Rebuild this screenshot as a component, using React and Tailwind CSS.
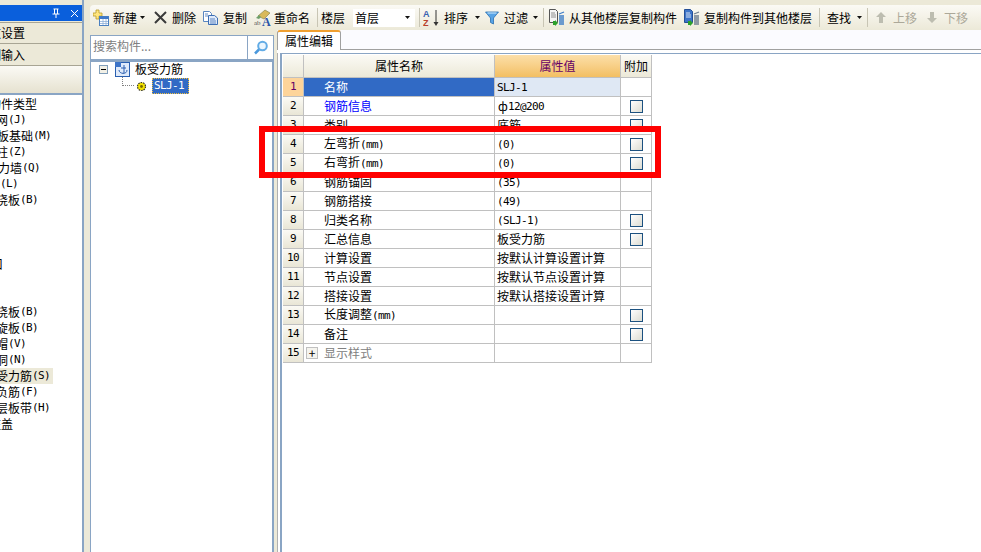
import React from 'react';

const cjk = "font-['Noto_Sans_CJK_SC','Liberation_Sans',sans-serif]";
const mono = "font-['DejaVu_Sans_Mono',monospace] text-[11px] tracking-[-0.62px]";

// half width characters are narrower than the default CJK latin
const Mixed = ({ text }) =>
  text.split(/([\x00-\x7f]+)/).map((s, i) =>
    /^[\x00-\x7f]/.test(s) ? (
      <span key={i} className={mono}>{s}</span>
    ) : (
      <span key={i}>{s}</span>
    )
  );

const NewIcon = () => (
  <svg width="16" height="18" viewBox="0 0 16 18" className="shrink-0">
    <path d="M3 1h3v3h3v3H6v3H3V7H0V4h3z" fill="#ffe680" stroke="#b79a2c" strokeWidth="0.8" />
    <rect x="6.5" y="7.5" width="9" height="9" fill="#fff" stroke="#4a80c0" />
    <rect x="6.5" y="7.5" width="9" height="2.5" fill="#3f78c8" />
    <path d="M7 12.5h8M7 14.5h8M10 10v6M13 10v6" stroke="#8fb0d8" strokeWidth="0.8" />
  </svg>
);

const DeleteIcon = () => (
  <svg width="13" height="13" viewBox="0 0 13 13" className="shrink-0">
    <path d="M1 1l11 11M12 1L1 12" stroke="#3a3a3a" strokeWidth="2" />
  </svg>
);

const CopyIcon = () => (
  <svg width="15" height="14" viewBox="0 0 15 14" className="shrink-0">
    <path d="M.5.5h6l2 2v8h-8z" fill="#fff" stroke="#5a86c0" />
    <path d="M5.5 4.5h6l3 2.5v6.500h-9z" fill="#dfeafa" stroke="#3d6fb4" />
    <path d="M7 8h5M7 10h6M7 12h6M2 3h3M2 5h3" stroke="#3d6fb4" strokeWidth="0.8" />
  </svg>
);

const RenameIcon = () => (
  <svg width="17" height="18" viewBox="0 0 17 18" className="shrink-0">
    <path d="M4 7l7-6 5 3-6 6z" fill="#d9b95a" stroke="#8c8a50" strokeWidth="0.7" />
    <path d="M2 9l3-3 2 2-2 2z" fill="#6f9f6a" />
    <text x="0" y="16" fontSize="7" fill="#555" fontFamily="Liberation Serif">ab</text>
    <text x="8" y="17" fontSize="12" fontWeight="700" fill="#2a55a8" fontFamily="Liberation Serif">A</text>
  </svg>
);

const SortIcon = () => (
  <svg width="17" height="18" viewBox="0 0 17 18" className="shrink-0">
    <text x="0" y="8" fontSize="9" fontWeight="700" fill="#3a62b0" fontFamily="Liberation Sans">A</text>
    <text x="0" y="17" fontSize="9" fontWeight="700" fill="#b8402c" fontFamily="Liberation Sans">Z</text>
    <path d="M13 1v14" stroke="#333" strokeWidth="1" />
    <path d="M10.500 13h5L13 17z" fill="#333" />
  </svg>
);

const FilterIcon = () => (
  <svg width="14" height="14" viewBox="0 0 14 14" className="shrink-0">
    <path d="M.5 1h13L8.500 7v6l-3-1.500V7z" fill="#58a4e6" stroke="#2a6fb0" strokeWidth="0.8" />
    <path d="M2.500 2h9" stroke="#d0ecff" />
  </svg>
);

const FloorCopyIcon = ({ dark }) => (
  <svg width="16" height="18" viewBox="0 0 16 18" className="shrink-0">
    <path d="M.5.5h6l2 2v11h-8z" fill={dark ? '#3d74c8' : '#f4f4f4'} stroke={dark ? '#254f96' : '#555'} />
    <path d="M2 4h4M2 6h5M2 8h5" stroke={dark ? '#fff' : '#777'} strokeWidth="0.8" />
    <path d="M4 12h2v-1l3 3-3 3v-1H4z" fill="#2ca02c" />
    <path d="M10 7h5M10 9h5M10 11h5M10 13h5M10 15h5" stroke={dark ? '#6f7f90' : '#3f7fc8'} strokeWidth="1.300" />
    <path d="M10 5l5-2" stroke={dark ? '#6f7f90' : '#3f7fc8'} strokeWidth="1.300" />
  </svg>
);

const MoveIcon = ({ down }) => (
  <svg width="10" height="11" viewBox="0 0 10 11" className="shrink-0">
    <path d={down ? 'M3 0h4v6h3l-5 5-5-5h3z' : 'M5 0l5 5H7v6H3V5H0z'} fill="#bdbdb0" />
  </svg>
);

const Caret = () => (
  <svg width="5" height="3" viewBox="0 0 5 3" className="shrink-0">
    <path d="M0 0h5L2.500 3z" fill="#111" />
  </svg>
);
const Sep = ({ className }) => <div className={`h-[19px] w-px shrink-0 bg-[#c8c5b4] ${className}`} />;

const Toolbar = () => (
  <div className="flex h-[25px] shrink-0 items-center rounded-tl-[4px] bg-gradient-to-b from-[#fbfaf5] to-[#ece9d8] pl-[3px] text-[12px] whitespace-nowrap text-black">
    <NewIcon />
    <span className="ml-1 w-[24px]">新建</span>
    <div className="ml-[3px]"><Caret /></div>
    <div className="ml-[9px]"><DeleteIcon /></div>
    <span className="ml-[5px] w-[24px]">删除</span>
    <div className="ml-[7px]"><CopyIcon /></div>
    <span className="ml-[5px] w-[24px]">复制</span>
    <div className="ml-[7px]"><RenameIcon /></div>
    <span className="ml-[3px] w-[36px]">重命名</span>
    <Sep className="ml-[7px]" />
    <span className="ml-[3px] w-[24px]">楼层</span>
    <div className="ml-[8px] flex h-[18px] w-[62px] shrink-0 items-center bg-white pl-[2px]">
      <span className="w-[50px]">首层</span>
      <Caret />
    </div>
    <Sep className="ml-[4px]" />
    <div className="ml-[3px]"><SortIcon /></div>
    <span className="ml-1 w-[24px]">排序</span>
    <div className="ml-[7px]"><Caret /></div>
    <div className="ml-[5px]"><FilterIcon /></div>
    <span className="ml-[5px] w-[24px]">过滤</span>
    <div className="ml-[5px]"><Caret /></div>
    <Sep className="ml-[5px]" />
    <div className="ml-[5px]"><FloorCopyIcon /></div>
    <span className="ml-1 w-[108px]">从其他楼层复制构件</span>
    <div className="ml-[7px]"><FloorCopyIcon dark /></div>
    <span className="ml-1 w-[108px]">复制构件到其他楼层</span>
    <Sep className="ml-[7px]" />
    <span className="ml-[7px] w-[24px]">查找</span>
    <div className="ml-[6px]"><Caret /></div>
    <Sep className="ml-[5px]" />
    <div className="ml-2"><MoveIcon /></div>
    <span className="ml-[7px] w-[24px] text-[#aca899]">上移</span>
    <div className="ml-[10px]"><MoveIcon down /></div>
    <span className="ml-[7px] w-[24px] text-[#aca899]">下移</span>
  </div>
);

// left list is scrolled sideways, so names are cut by the window edge
const listItems = [
  { t: '构件类型', m: '-ml-[11px]' },
  { t: '轴网(J)', m: '-ml-[16px]' },
  { t: '筏板基础(M)', m: '-ml-[15px]' },
  { t: '框架柱(Z)', m: '-ml-[28px]' },
  { t: '剪力墙(Q)', m: '-ml-[14px]' },
  { t: '梁(L)', m: '-ml-[12px]' },
  { t: '现浇板(B)', m: '-ml-[16px]' },
  { t: '' },
  { t: '' },
  { t: '' },
  { t: '口', m: '-ml-[9px]' },
  { t: '' },
  { t: '' },
  { t: '现浇板(B)', m: '-ml-[16px]' },
  { t: '螺旋板(B)', m: '-ml-[16px]' },
  { t: '柱帽(V)', m: '-ml-[16px]' },
  { t: '板洞(N)', m: '-ml-[16px]' },
  { t: '板受力筋(S)', m: '-ml-[16px]', active: true },
  { t: '板负筋(F)', m: '-ml-[16px]' },
  { t: '楼层板带(H)', m: '-ml-[16px]' },
  { t: '柱盖', m: '-ml-[11px]' },
];

const LeftPanel = () => (
  <div className="flex w-[82px] shrink-0 flex-col overflow-hidden pt-[5px] text-[12px] text-black">
    <div className="flex h-[16px] shrink-0 items-center justify-end bg-[#0a5fdc] pr-px">
      <svg width="10" height="11" viewBox="0 0 10 11" className="mr-[9px]">
        <path d="M2.500 1h5M3.500 1v5M6.500 1v5M1.500 6h7M5 6v4" stroke="#fff" strokeWidth="1" fill="none" />
      </svg>
      <svg width="9" height="9" viewBox="0 0 9 9" className="mr-[2px]">
        <path d="M1 1l7 7M8 1L1 8" stroke="#fff" strokeWidth="1" />
      </svg>
    </div>
    <div className="mt-px flex h-[22px] shrink-0 items-center overflow-hidden border-y border-[#a8a594] bg-[#ece9d8]">
      <span className="-ml-[23px] whitespace-nowrap">参数设置</span>
    </div>
    <div className="flex h-[22px] shrink-0 items-center overflow-hidden border-b border-[#a8a594] bg-[#ece9d8]">
      <span className="-ml-[23px] whitespace-nowrap">绘制输入</span>
    </div>
    <div className="h-[27px] shrink-0 bg-gradient-to-b from-[#fbfaf5] to-[#e6e2d0]" />
    <div className="flex-1 overflow-hidden border-t-2 border-[#8aa5c4] bg-white pt-px">
      {listItems.map((item, i) => (
        <div key={i} className="h-[16px] overflow-hidden leading-[16px] whitespace-nowrap">
          <div className={`inline-flex h-[16px] items-center pr-[3px] ${item.m || ''} ${item.active ? 'bg-[#ece9d8]' : ''}`}>
            <Mixed text={item.t} />
          </div>
        </div>
      ))}
    </div>
  </div>
);

const TreePanel = () => (
  <div className="flex w-[184px] shrink-0 flex-col bg-[#ece9d8]">
    <div className="mt-[5px] flex h-[25px] shrink-0 border border-[#8aa5c4] bg-white">
      <div className="flex w-[157px] items-center border-r border-[#8aa5c4] pb-[3px] pl-[2px] text-[12px] text-[#808080]">搜索构件...</div>
      <div className="flex flex-1 items-center justify-center">
        <svg width="16" height="15" viewBox="0 0 16 15">
          <circle cx="9.500" cy="6" r="4.300" fill="#eaf6ff" stroke="#62ace6" strokeWidth="2" />
          <path d="M6 9.500L2 13.500" stroke="#4a98dc" strokeWidth="2.500" />
        </svg>
      </div>
    </div>
    <div className="flex-1 border-t-2 border-r-2 border-l border-[#8aa5c4] bg-white text-[12px] text-black">
      <div className="flex h-[14px] items-center pl-[8px]">
        <div className="flex h-[9px] w-[9px] items-center justify-center border border-[#7f9db9] bg-[#f2f0e6]">
          <div className="h-px w-[5px] bg-black" />
        </div>
        <svg width="15" height="15" viewBox="0 0 15 15" className="ml-[7px]">
          <rect x="0.500" y="0.500" width="14" height="14" fill="#dfeafa" stroke="#2a5fb0" />
          <path d="M0 0h6v5H0z" fill="#3d74c8" />
          <path d="M9 3v8M6 6h5M4 8c0 4 8 5 8 0" stroke="#2a5fb0" fill="none" />
        </svg>
        <span className="ml-[5px]">板受力筋</span>
      </div>
      <div className="flex h-[20px] items-center pl-[31px]">
        <div className="mb-[9px] h-[9px] w-[12px] border-b border-l border-dotted border-[#808080]" />
        <svg width="11" height="11" viewBox="0 0 11 11" className="ml-[2px] mr-[5px] shrink-0">
          <circle cx="5.500" cy="5.500" r="4" fill="#f4e300" stroke="#333" strokeWidth="1.200" strokeDasharray="1.500 1" />
          <circle cx="5.500" cy="5.500" r="1.400" fill="#7a6a00" />
        </svg>
        <div className={`flex h-[16px] w-[37px] items-center border border-dotted border-[#f0c040] bg-[#316ac5] pl-px text-white ${mono}`}>
          SLJ-1
        </div>
      </div>
    </div>
  </div>
);

const rows = [
  { n: '名称', v: 'SLJ-1', selected: true },
  { n: '钢筋信息', v: '12@200', sym: true, link: true, check: true },
  { n: '类别', v: '底筋', check: true },
  { n: '左弯折(mm)', v: '(0)', check: true },
  { n: '右弯折(mm)', v: '(0)', check: true },
  { n: '钢筋锚固', v: '(35)' },
  { n: '钢筋搭接', v: '(49)' },
  { n: '归类名称', v: '(SLJ-1)', check: true },
  { n: '汇总信息', v: '板受力筋', check: true },
  { n: '计算设置', v: '按默认计算设置计算' },
  { n: '节点设置', v: '按默认节点设置计算' },
  { n: '搭接设置', v: '按默认搭接设置计算' },
  { n: '长度调整(mm)', v: '', check: true },
  { n: '备注', v: '', check: true },
  { n: '显示样式', v: '', expand: true },
];

const Check = () => (
  <div className="h-[13px] w-[13px] border border-[#1c5180] bg-gradient-to-br from-white to-[#dcdcd2]" />
);

const PropertyGrid = () => (
  <div className="ml-px mt-px w-[369px] text-[12px] text-black">
    <div className="flex h-[23px] border-b border-[#c0c0c0]">
      <div className="w-[21px] border-r border-[#c0c0c0] bg-gradient-to-b from-[#fbfaf5] to-[#ece9d8]" />
      <div className="flex w-[191px] items-center justify-center border-r border-[#c0c0c0] bg-gradient-to-b from-[#fbfaf5] to-[#ece9d8]">属性名称</div>
      <div className="flex w-[126px] items-center justify-center border-r border-[#c0c0c0] bg-gradient-to-b from-[#fcdfa8] to-[#f3bf62] text-[#660066]">属性值</div>
      <div className="flex w-[31px] items-center justify-center border-r border-[#c0c0c0] bg-gradient-to-b from-[#fbfaf5] to-[#ece9d8]">附加</div>
    </div>
    {rows.map((r, i) => (
      <div key={r.n} className="flex h-[19px] border-b border-[#c0c0c0]">
        <div className={`flex w-[21px] items-center justify-center border-r border-[#c0c0c0] ${mono} ${r.selected ? 'bg-[#fdd49a] text-[#660066]' : 'bg-gradient-to-b from-[#fbfaf5] to-[#e9e6d6]'}`}>
          {i + 1}
        </div>
        <div className={`flex w-[191px] items-center border-r border-[#c0c0c0] ${r.selected ? 'bg-[#316ac5] text-white' : ''} ${r.link ? 'text-[#0000ff]' : ''} ${r.expand ? 'text-[#808080]' : ''}`}>
          {r.expand ? (
            <div className="ml-[2px] mr-[6px] flex h-[12px] w-[12px] items-center justify-center border border-[#c0c0c0] bg-[#f5f4ee] text-[12px] leading-none text-black">+</div>
          ) : (
            <div className="w-[20px]" />
          )}
          <span><Mixed text={r.n} /></span>
        </div>
        <div className={`flex w-[126px] items-center border-r border-[#c0c0c0] pl-[2px] ${r.selected ? 'bg-[#dfe8f4]' : ''}`}>
          {r.sym && <span className="ml-px w-[10px]">ф</span>}
          <span><Mixed text={r.v} /></span>
        </div>
        <div className="flex w-[31px] items-center justify-center border-r border-[#c0c0c0] pl-px">
          {r.check && <Check />}
        </div>
      </div>
    ))}
  </div>
);

const PropertyPanel = () => (
  <div className="flex min-w-0 flex-1 flex-col bg-[#fbfbff]">
    <div className="h-[20px] shrink-0 border-b border-[#a0a0a0]">
      <div className="h-[20px] w-[64px] rounded-t-[3px] border-x border-[#a0a0a0] border-t-2 border-t-[#f0a030] bg-white pl-[7px] text-[12px] leading-[17px] text-black">
        属性编辑
      </div>
    </div>
    <div className="h-[3px] shrink-0 bg-white" />
    <div className="flex min-h-0 flex-1">
      <div className="w-[3px] shrink-0 border-l border-[#b0b0b0] bg-white" />
      <div className="min-w-0 flex-1 border-l-2 border-t border-[#8aa5c4] bg-white">
        <PropertyGrid />
      </div>
    </div>
  </div>
);

export default function App() {
  return (
    <div className={`relative flex h-[552px] w-[981px] overflow-hidden bg-[#ece9d8] ${cjk}`}>
      <LeftPanel />
      <div className="w-[2px] shrink-0 bg-[#8aa5c4]" />
      <div className="w-[6px] shrink-0" />
      <div className="flex min-w-0 flex-1 flex-col pt-[5px]">
        <Toolbar />
        <div className="flex min-h-0 flex-1">
          <TreePanel />
          <div className="w-[3px] shrink-0" />
          <PropertyPanel />
        </div>
      </div>
      {/* red annotation box over the grid */}
      <div className="absolute left-[259px] top-[126px] h-[52px] w-[402px] border-[6px] border-[#ff0000]" />
    </div>
  );
}
